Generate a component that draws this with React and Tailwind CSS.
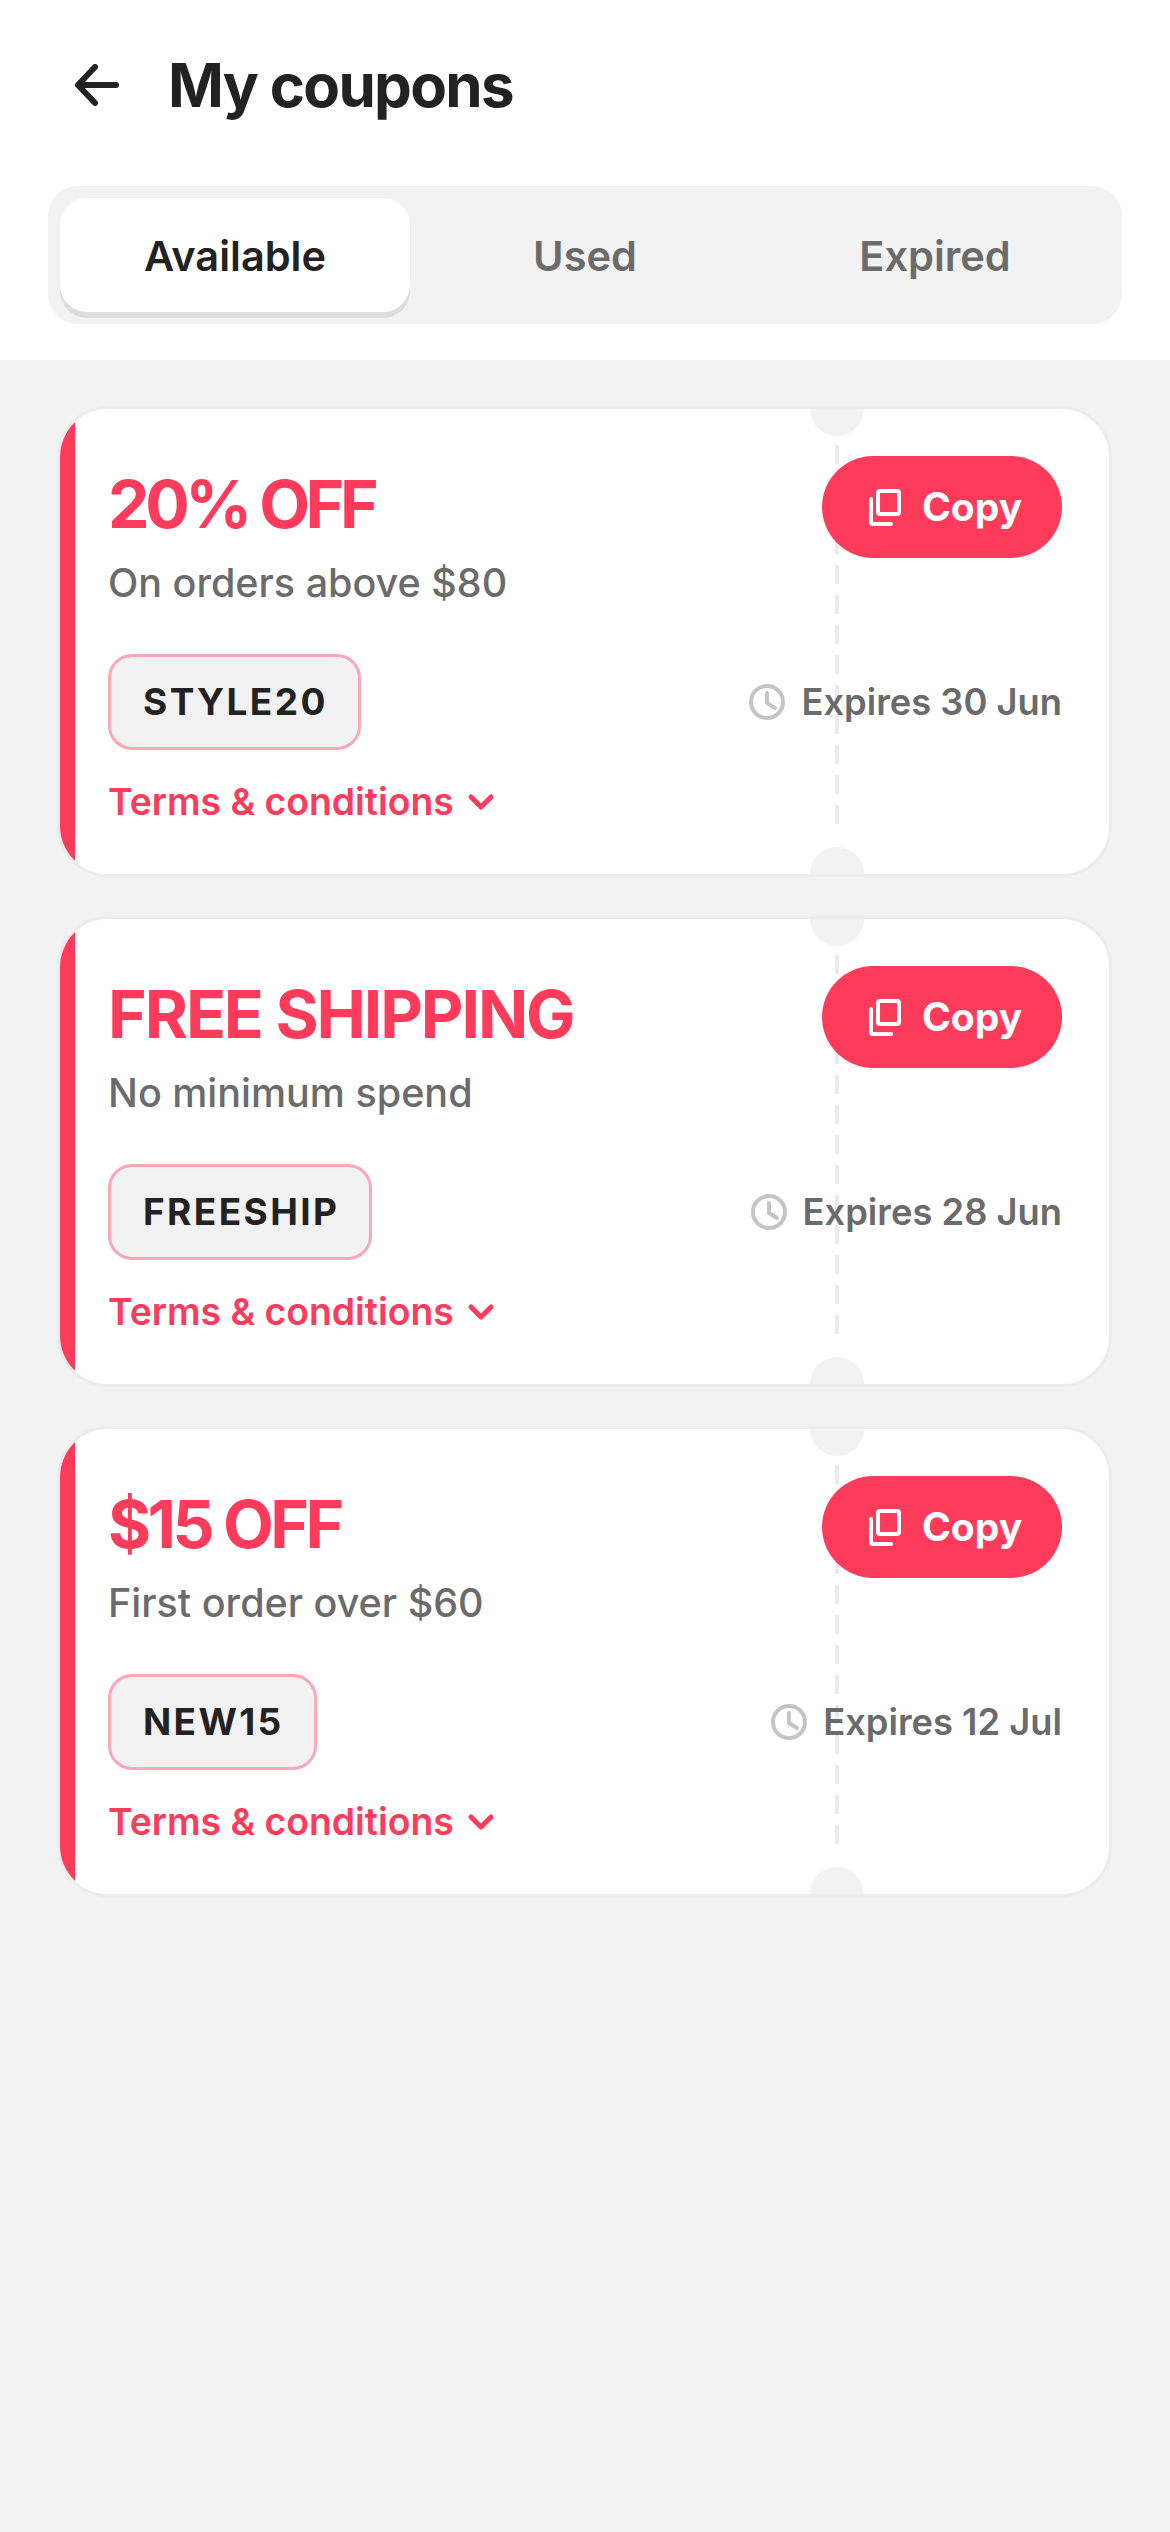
import React from 'react';

const coupons = [
  { title: '20% OFF', titleClass: 'tracking-[-4.4px]', desc: 'On orders above $80', code: 'STYLE20', expires: 'Expires 30 Jun' },
  { title: 'FREE SHIPPING', titleClass: 'tracking-[-2.1px]', desc: 'No minimum spend', code: 'FREESHIP', expires: 'Expires 28 Jun' },
  { title: '$15 OFF', titleClass: 'tracking-[-3.6px]', desc: 'First order over $60', code: 'NEW15', expires: 'Expires 12 Jul' },
];

function BackIcon() {
  return (
    <svg width="45" height="42" viewBox="0 0 45 42" fill="none" stroke="#222222" strokeWidth="6" strokeLinecap="round" strokeLinejoin="round">
      <path d="M42 21H4M21 3 4 21l17 18" />
    </svg>
  );
}

function CopyIcon() {
  return (
    <svg width="32" height="37" viewBox="0 0 32 37" fill="none" stroke="#ffffff" strokeWidth="4" strokeLinejoin="round" strokeLinecap="round">
      <rect x="9" y="2" width="21" height="23" rx="2" />
      <path d="M2 10v23a2 2 0 0 0 2 2h18" />
    </svg>
  );
}

function ClockIcon() {
  return (
    <svg width="36" height="36" viewBox="0 0 36 36" fill="none" stroke="#c4c4c4" strokeWidth="4" strokeLinecap="round" strokeLinejoin="round">
      <circle cx="18" cy="18" r="16" />
      <path d="M18 9v10l8 5" />
    </svg>
  );
}

function ChevronIcon() {
  return (
    <svg width="28" height="18" viewBox="0 0 28 18" fill="none" stroke="#ff3b5c" strokeWidth="5" strokeLinecap="round" strokeLinejoin="round">
      <path d="m4 4 10 10L24 4" />
    </svg>
  );
}

function Coupon({ coupon }) {
  return (
    <div className="relative h-[471px] rounded-[51px] border-[3px] border-[#ececec] bg-white overflow-hidden">
      <div className="absolute left-0 top-0 bottom-0 w-[15px] bg-[#ff3b5c]"></div>
      <div className="absolute left-[750px] top-[-27px] w-[54px] h-[54px] rounded-full bg-[#f2f2f2]"></div>
      <div className="absolute left-[750px] bottom-[-27px] w-[54px] h-[54px] rounded-full bg-[#f2f2f2]"></div>
      <svg className="absolute left-[775px] top-[36px]" width="4" height="379">
        <line x1="2" y1="0" x2="2" y2="379" stroke="#ebebeb" strokeWidth="4" strokeDasharray="19 11" />
      </svg>

      <div className="relative pl-[48px] pr-[47px] pt-[47px]">
        <div className="flex items-start justify-between">
          <div>
            <div className={`mt-[8px] text-[66px] leading-[80px] font-bold text-[#ff3b5c] ${coupon.titleClass}`}>{coupon.title}</div>
            <div className="mt-[16px] text-[39.5px] leading-[46px] font-medium text-[#6b6b6b]">{coupon.desc}</div>
          </div>
          <button className="flex items-center gap-[21px] pl-[47px] w-[240px] h-[102px] rounded-full bg-[#ff3b5c] text-white text-[39px] font-bold">
            <CopyIcon />
            Copy
          </button>
        </div>
        <div className="mt-[48px] flex items-center justify-between">
          <div className="h-[96px] pl-[32px] pr-[30px] flex items-center rounded-[24px] border-[3px] border-[#f9a8b8] bg-[#f2f2f2] text-[37px] font-bold text-[#222222] tracking-[2.4px]">
            {coupon.code}
          </div>
          <div className="flex items-center gap-[16px] text-[36.3px] font-semibold text-[#6b6b6b]">
            <ClockIcon />
            {coupon.expires}
          </div>
        </div>
        <div className="mt-[29px] flex items-center gap-[13px] text-[37.3px] leading-[46px] font-semibold text-[#ff3b5c]">
          Terms &amp; conditions
          <ChevronIcon />
        </div>
      </div>
    </div>
  );
}

export default function App() {
  return (
    <div className="min-h-[2532px] bg-[#f2f2f2] font-['Inter',sans-serif]">
      <div className="bg-white h-[360px] pt-[60px]">
        <div className="flex items-center h-[50px] pl-[74px] gap-[49px]">
          <BackIcon />
          <h1 className="text-[60px] font-bold text-[#222222] tracking-[-1.7px]">My coupons</h1>
        </div>
        <div className="mt-[76px] mx-[48px] h-[138px] rounded-[30px] bg-[#f2f2f2] p-[12px] flex text-[41.5px] font-semibold">
          <div className="flex-1 h-[114px] pt-[2px] flex items-center justify-center rounded-[27px] bg-white shadow-[0_6px_0_#dddddd] text-[#222222]">Available</div>
          <div className="flex-1 h-[114px] pt-[2px] flex items-center justify-center text-[#6b6b6b]">Used</div>
          <div className="flex-1 h-[114px] pt-[2px] flex items-center justify-center text-[#6b6b6b]">Expired</div>
        </div>
      </div>
      <div className="pt-[46px] pl-[57px] pr-[58px] flex flex-col gap-[39px]">
        {coupons.map(c => <Coupon key={c.code} coupon={c} />)}
      </div>
    </div>
  );
}
